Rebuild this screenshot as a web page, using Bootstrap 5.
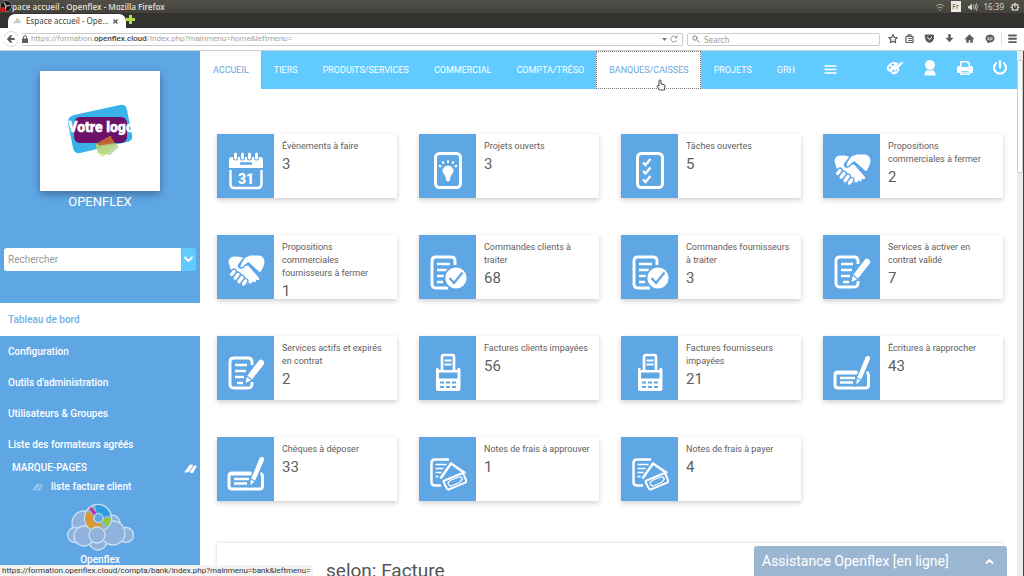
<!DOCTYPE html>
<html lang="fr">
<head>
<meta charset="utf-8">
<meta name="viewport" content="width=device-width, initial-scale=1">
<title>Espace accueil - Openflex</title>
<link href="https://cdn.jsdelivr.net/npm/bootstrap@5.3.0/dist/css/bootstrap.min.css" rel="stylesheet">
<style>
  :root { --side: #5fa6e5; --sky: #61caff; --ui: "Noto Sans", "Open Sans", sans-serif; --app: Roboto, sans-serif; }
  body { font-family: var(--app); font-size: 10px; line-height: 14px; color: #606060; background: #fff; }
  a { text-decoration: none; color: inherit; }
  svg { display: block; flex: none; }
  .ico { fill: none; stroke: currentColor; stroke-linecap: round; stroke-linejoin: round; }
  .ui { font-family: var(--ui); font-size: 8px; }

  /* browser chrome */
  .titlebar { height: 13px; background: linear-gradient(#504f48, #43423c); color: #dcd8ce; }
  .indicators { gap: 6px; }
  .win-name { font-size: 8px; font-weight: 600; }
  .lang { background: #eceae5; color: #45443f; font-size: 7px; line-height: 11px; width: 10px; }
  .tabstrip { height: 15px; background: #33322e; }
  .tab { width: 118px; height: 14px; background: #fff; border-radius: 7px 7px 0 0; color: #444; }
  .toolbar { height: 23px; background: #fff; border-bottom: 1px solid #d0d0d0; color: #5c5c5c; padding: 0 6px 0 4px; }
  .field { height: 13px; border: 1px solid #ccc; border-radius: 2px; background: #fff; }
  .field input { border: 0; outline: 0; padding: 0; min-width: 0; line-height: 11px; color: #666; background: transparent; }
  .field input::placeholder { color: #999; }
  .address { gap: 3px; padding: 0 4px 0 0; }
  .url, .statusline { font-family: var(--app); }
  .url { color: #a4a4a4; white-space: nowrap; }
  .url b { color: #444; font-weight: 500; }
  .searchbox { width: 193px; }
  .plain { border: 0; background: none; padding: 0; color: inherit; }

  /* sidebar */
  .sidebar { width: 200px; background: var(--side); color: #fff; }
  .logo-box { width: 120px; height: 120px; background: #fff; box-shadow: 0 3px 8px rgba(0,0,0,.35); margin-top: 20px; }
  .company { font-size: 13px; line-height: 22px; }
  .finder { margin: 35px 4px 32px; height: 23px; }
  .finder input { border: 0; padding: 0 4px; font-size: 10px; border-radius: 3px 0 0 3px; min-width: 0; color: #555; }
  .finder input::placeholder { color: #999; }
  .finder button { width: 15px; background: var(--sky); border: 0; border-radius: 0 3px 3px 0; color: #fff; padding: 0; }
  .side-menu a { display: block; padding: 8px; line-height: 15px; font-weight: 500; }
  .side-menu a.active { background: #fff; color: #6fb0e6; padding: 9px 8px; }
  .marks { line-height: 16px; padding: 0 3px 0 12px; font-weight: 500; }
  .mark-item { font-size: 10px; line-height: 16px; padding: 3px 0 0 32px; font-weight: 500; }

  /* top navigation */
  .topnav { height: 38px; background: var(--sky); color: #fff; font-size: 9px; }
  .topnav a { display: flex; align-items: center; padding: 0 11px 0 12px; border: 1px dotted transparent; }
  .topnav a.active { background: #fff; color: #63a6df; }
  .topnav a.hovered { background: #fff; color: #6fa5d6; border-color: #777; }
  .topnav-tools { gap: 17px; padding: 0 8px 4px 0; }

  /* tiles */
  .tiles { display: grid; grid-template-columns: repeat(4, 1fr); gap: 37px 22px; padding: 45px 14px 0 17px; }
  .tile { height: 64px; background: #fff; box-shadow: 0 2px 5px rgba(0,0,0,.2); }
  .tile-pic { width: 57px; background: var(--side); color: #fff; padding-top: 16px; }
  .tile-text { font-size: 9px; line-height: 13px; padding: 6px 0 0 8px; }
  .tile-text strong { display: block; font-weight: 400; font-size: 15px; line-height: 22px; }
  .panel-next { margin: 42px 14px 0 17px; box-shadow: 0 0 4px rgba(0,0,0,.16); padding: 16px 0 0 109px; height: 60px; }
  .panel-next h2 { font-size: 19px; line-height: 24px; margin: 0; color: #555; font-weight: 400; }

  .scroller { width: 7px; background: #eeebeb; border-right: 1px solid #444; }
  .thumb { height: 113px; background: #fff; border: 1px solid #ccc; border-radius: 2px; margin-top: 9px; }
  .statusline { position: absolute; left: 0; bottom: 0; height: 11px; line-height: 11px; background: #f3f3f3; color: #333; padding: 0 2px; }
  .helpbox { position: absolute; right: 17px; bottom: 0; width: 253px; height: 30px; border: 0; background: #9ab6d1; color: #fff; border-radius: 3px 3px 0 0; font-size: 14px; padding: 0 13px 0 8px; }
  .pointer { position: absolute; left: 50%; top: 27px; margin-left: 8px; }
</style>
</head>
<body class="vh-100 d-flex flex-column overflow-hidden position-relative">

<svg width="0" height="0" class="position-absolute" aria-hidden="true">
  <defs>
    <symbol id="i-cal" viewBox="0 0 36 40">
      <path d="M1 18V10q0-3 3-3h28q3 0 3 3v8z" fill="currentColor"/>
      <path d="M2.500 20v14q0 4 4 4h23q4 0 4-4V20" fill="none" stroke="currentColor" stroke-width="2.500"/>
      <g stroke="#5fa6e5" stroke-width="5" stroke-linecap="round"><path d="M7.500 4v4M14.500 4v4M21.500 4v4M28.500 4v4"/></g>
      <g stroke="currentColor" stroke-width="3" stroke-linecap="round"><path d="M7.500 4v4M14.500 4v4M21.500 4v4M28.500 4v4"/></g>
      <path d="M12 13.500h12" stroke="#5fa6e5" stroke-width="2.500"/>
      <text x="18" y="33.500" text-anchor="middle" font-family="Roboto, sans-serif" font-weight="900" font-size="14" fill="currentColor">31</text>
    </symbol>
    <symbol id="i-bulb" viewBox="0 0 36 40">
      <rect x="5.500" y="3.500" width="25" height="34" rx="4" fill="none" stroke="currentColor" stroke-width="3"/>
      <path d="M18 15.500a5.500 5.500 0 0 1 5.500 5.500q0 2-2.500 4.500l-1 3h-4l-1-3q-2.500-2.500-2.500-4.500a5.500 5.500 0 0 1 5.500-5.500z" fill="currentColor"/>
      <circle cx="18" cy="29.500" r="2" fill="currentColor"/>
      <path d="M18 10.500v2.500M12.500 11.500l1.200 2.300M23.500 11.500l-1.200 2.300M9 15.500l2.200 1.200M27 15.500l-2.200 1.200" stroke="currentColor" stroke-width="2"/>
    </symbol>
    <symbol id="i-tasks" viewBox="0 0 36 40">
      <rect x="5.500" y="3.500" width="25" height="34" rx="4" fill="none" stroke="currentColor" stroke-width="3"/>
      <path d="m11 12.500 2.500 2.500 5-6M11 21l2.500 2.500 5-6M11 29.500l2.500 2.500 5-6" fill="none" stroke="currentColor" stroke-width="2.300"/>
    </symbol>
    <symbol id="i-hands" viewBox="0 0 38 40">
      <path d="M1.500 11Q2 6 7 5.500l5.500.2q2 .3 4 1.300L11 13.500q-1 3 2 4 3 .5 5-2.500l3-.5L32 27q.8 2-1 2.300-1.300 0-2.300-1 .8 2.500-.7 3-1.700.4-3-1.500.6 2.500-1 2.800-1.800 0-2.700-1.600.3 2-1.200 2.200-1.300 0-2.100-1.200L7 20.500 3.500 18z" fill="currentColor"/>
      <path d="m17.500 7 6-2.500h9q4.500 1 5 6-.2 5-4.500 11L21.500 11.500q-2 1.500-4.500 4.200-2 1.300-3.500 0 0-2 4-8.700z" fill="currentColor"/>
      <path d="M17.500 6.500 11.800 14q-.6 2.600 2 3 2.400 0 4.700-3l2.800-2.200L33.500 23" fill="none" stroke="#5fa6e5" stroke-width="1.300"/>
      <path d="m7 20.500-2.500 3M11 23.500l-2.800 3.700M15 26.500 12 30.700M18.500 30 16.500 33" stroke="#5fa6e5" stroke-width="6.200" stroke-linecap="round"/>
      <path d="m7 20.500-2.500 3M11 23.500l-2.800 3.700M15 26.500 12 30.700M18.500 30 16.500 33" stroke="currentColor" stroke-width="3.400" stroke-linecap="round"/>
    </symbol>
    <symbol id="i-done" viewBox="0 0 38 40">
      <path d="M26 14V10q0-4-4-4H7q-4 0-4 4v23q0 4 4 4h12" fill="none" stroke="currentColor" stroke-width="2.900"/>
      <path d="M8 13h13M8 19h10M8 25h7M8 31h6" stroke="currentColor" stroke-width="2.300"/>
      <circle cx="27" cy="27" r="11.500" fill="currentColor" stroke="#5fa6e5" stroke-width="1.800"/>
      <path d="m20.500 27 4.500 5 8.500-10.500" fill="none" stroke="#5fa6e5" stroke-width="2.200"/>
    </symbol>
    <symbol id="i-edit" viewBox="0 0 38 40">
      <path d="M25 13V10q0-4-4-4H7q-4 0-4 4v22q0 4 4 4h14q4 0 4-4v-2" fill="none" stroke="currentColor" stroke-width="2.900"/>
      <path d="M8 13h12M8 19h11M8 25h9M10 31h6" stroke="currentColor" stroke-width="2.300"/>
      <path d="m17.500 32 2-8.500L31.500 8q2.500-2.500 5 0t.7 5L25 28.500z" fill="currentColor" stroke="#5fa6e5" stroke-width="1.300"/>
      <path d="m20 24 4.500 4" stroke="#5fa6e5" stroke-width="1.200"/>
    </symbol>
    <symbol id="i-pos" viewBox="0 0 36 40">
      <path d="M12 18V5q0-2 2-2h8q2 0 2 2v13" fill="none" stroke="currentColor" stroke-width="2.700"/>
      <path d="M14.500 8.500h7M14.500 12.500h7" stroke="currentColor" stroke-width="2"/>
      <path d="M6.500 16h2v2h19v-2h2l1 1.500V37q0 2-2 2H8q-2 0-2-2V17.500z" fill="currentColor"/>
      <path d="M9 20.500h18.500v6H9z" fill="#5fa6e5"/>
      <path d="M10 30.500h4M16 30.500h4M22 30.500h4M10 35h4M16 35h4M22 35h4" stroke="#5fa6e5" stroke-width="1.800"/>
    </symbol>
    <symbol id="i-check" viewBox="0 0 38 40">
      <path d="M3 21h23M33.500 20q2 1 2 3v10q0 3-3 3H5q-3 0-3-3V23q0-3 3-3h19" fill="none" stroke="currentColor" stroke-width="3"/>
      <path d="M7 26h15M7 30.500h13" stroke="currentColor" stroke-width="2.300"/>
      <path d="m22.500 34 .8-8 8.700-21q1.500-2.500 4-1.500 2.500 1.300 1.500 4L28.500 28.500z" fill="currentColor" stroke="#5fa6e5" stroke-width="1.300"/>
      <path d="m23 25.500 5.500 3" stroke="#5fa6e5" stroke-width="1.200"/>
    </symbol>
    <symbol id="i-cash" viewBox="0 0 38 40">
      <path d="M20 6.500H6q-3.500 0-3.500 3.500v19q0 3.500 3.500 3.500h6" fill="none" stroke="currentColor" stroke-width="2.500"/>
      <path d="M6.500 11.500h11M6.500 15.500h8M6.500 19.500h6M6.500 23.500h3" stroke="currentColor" stroke-width="1.700"/>
      <path d="M11.500 25.500 22 10.500l13 9" fill="none" stroke="currentColor" stroke-width="2.400"/>
      <path d="M34 17.500q2 0 2.500 1.500l.5 2-5-3.500z" fill="currentColor"/>
      <path d="m15.500 27.500 17-7q1.500-.5 2.200 1l2.500 6q.5 1.500-1 2.200l-16 6.500q-1.700.6-2.400-.9l-3-5.800q-.6-1.500.7-2z" fill="none" stroke="currentColor" stroke-width="2"/>
      <path d="m19 29.500 3-2.500 8-3q2.500-.5 3.500 2l-3 3.500-8 3.200q-3 .6-3.500-3.200z" fill="none" stroke="currentColor" stroke-width="1.200"/>
    </symbol>
    <symbol id="i-clip" viewBox="0 0 12 10">
      <path d="M1.500 8 6 2l1.500.3L4 7.500zM6.300 8.300 10 3l.8 0L8 8.300z" fill="currentColor" stroke="currentColor" stroke-width="1.600" stroke-linejoin="round"/>
    </symbol>
  </defs>
</svg>

<header class="ui flex-shrink-0">
  <div class="titlebar d-flex align-items-center justify-content-between">
    <div class="d-flex align-items-center">
      <svg width="12" height="13" viewBox="0 0 12 13"><circle cx="6" cy="6" r="5.500" fill="#161616" stroke="#aaa" stroke-width=".6"/><path d="M6 6 4 2.500M6 6l4-.5M6 6l-1 4" stroke="#ccc" stroke-width="1.200"/><circle cx="2.800" cy="9.500" r="2.600" fill="#e3120b"/></svg>
      <span class="win-name">pace accueil - Openflex - Mozilla Firefox</span>
    </div>
    <div class="indicators d-flex align-items-center pe-1">
      <svg class="ico" width="10" height="10" viewBox="0 0 10 10" opacity=".65"><path d="M1 4q4-3.500 8 0M2.500 6q2.500-2 5 0M4.300 8q.7-.6 1.400 0"/></svg>
      <span class="lang text-center">Fr</span>
      <svg class="ico" width="11" height="10" viewBox="0 0 11 10"><path d="M1 4v2.500h1.500L5 8.500v-7L2.500 4z" fill="currentColor" stroke="none"/><path d="M6.500 3.500q1 1.500 0 3M8 2.500q1.600 2.500 0 5M9.500 1.500q2 3.500 0 7" stroke-width=".8"/></svg>
      <span>16:39</span>
      <svg class="ico" width="10" height="10" viewBox="0 0 10 10"><circle cx="5" cy="5.300" r="3" stroke-width="1.100"/><path d="M5 1v4M1 5.300h1M8 5.300h1M2.200 8.200l.5-.5M7.800 8.200l-.5-.5M2.200 2.400l.5.5M7.800 2.400l-.5.500" stroke-width="1.200"/></svg>
    </div>
  </div>
  <div class="tabstrip d-flex align-items-end ps-1">
    <div class="tab d-flex align-items-center ms-1 ps-1 pe-2">
      <svg width="10" height="8" viewBox="0 0 10 8"><path d="M1 6.500q0-2 2-2 1-2.500 3-1.500 3 .3 3 3z" fill="#b9cfdd"/><path d="M4 2.500q1.500-1.500 3 0" stroke="#d9a541" fill="none"/></svg>
      <span class="ps-1 flex-grow-1 text-nowrap">Espace accueil - Ope…</span>
      <button class="plain" aria-label="Fermer l’onglet"><svg width="5" height="5" viewBox="0 0 5 5"><path d="m.5.5 4 4M4.500.5l-4 4" stroke="#555" stroke-width="1.400"/></svg></button>
    </div>
    <button class="plain mb-1" aria-label="Nouvel onglet"><svg width="9" height="9" viewBox="0 0 9 9"><path d="M3 0h3v3h3v3H6v3H3V6H0V3h3z" fill="#b4dd48"/></svg></button>
  </div>
  <div class="toolbar d-flex align-items-center gap-1">
    <button class="plain" aria-label="Page précédente"><svg class="ico" width="14" height="16" viewBox="0 0 14 16"><circle cx="7" cy="8" r="7.500" stroke="#ccc" stroke-width=".7"/><path d="M10 8H4.500M7 5 4 8l3 3" stroke-width="1.800"/></svg></button>
    <div class="field address flex-grow-1 d-flex align-items-center border-start-0">
      <svg width="6" height="8" viewBox="0 0 6 8"><path d="M0 3.500h6V8H0z" fill="currentColor"/><path d="M1.500 4V2.200a1.500 1.500 0 0 1 3 0V4" fill="none" stroke="currentColor"/></svg>
      <span class="url flex-grow-1">https://formation.<b>openflex.cloud</b>/index.php?mainmenu=home&amp;leftmenu=</span>
      <svg width="5" height="4" viewBox="0 0 5 4"><path d="M0 1h5L2.500 4z" fill="#777"/></svg>
      <svg class="ico" width="8" height="8" viewBox="0 0 8 8"><path d="M6.500 5.500a3 3 0 1 1 0-3M7 .8v2H5" stroke="#999"/></svg>
    </div>
    <label class="field searchbox d-flex align-items-center gap-1 px-1">
      <svg class="ico" width="8" height="8" viewBox="0 0 8 8"><circle cx="3" cy="3" r="2.200" stroke="#888"/><path d="m5 5 2.300 2.300" stroke="#888"/></svg>
      <input class="flex-grow-1" type="text" placeholder="Search" aria-label="Search">
    </label>
    <svg class="ico ms-1" width="130" height="12" viewBox="0 0 130 12">
      <path d="m5 1.500 1.300 2.800 3 .3L7 6.700l.7 3L5 8.200l-2.700 1.500.7-3L.8 4.600l3-.3z" stroke-width="1.200"/>
      <path d="M18 3.500h7v6h-7zM20 3V1.800h3V3M20.500 5.500h3M20.500 7.500h3" stroke-width="1.200"/>
      <path d="M37.500 2h8v3.500q-.5 3.500-4 4-3.500-.5-4-4z" fill="currentColor"/><path d="m39.500 4.500 2 2 2-2" stroke="#fff"/>
      <path d="M60.500 1.500h2V5H65l-3.500 4L58 5h2.500z" fill="currentColor" stroke-width=".5"/>
      <path d="m77 6 4.500-4.500L86 6h-1.500v3.500h-2V7h-2v2.500h-2V6z" fill="currentColor" stroke-width=".5"/>
      <path d="M102 1.500q4.500.5 4.500 4t-4.500 4l-3 .5.500-1.500q-2-1-2-3 0-3.500 4.500-4z" fill="currentColor" stroke="none"/><path d="M99.500 5h5M100 6.500q2 1.500 4 0" stroke="#fff" stroke-width=".8"/>
      <path d="M113.500 0v12" stroke="#ddd"/>
      <path d="M121 2.500h7M121 5.800h7M121 9.100h7" stroke-width="1.900"/>
    </svg>
  </div>
</header>

<div class="flex-grow-1 d-flex overflow-hidden">
  <aside class="sidebar flex-shrink-0 d-flex flex-column">
    <div class="logo-box mx-auto d-flex align-items-center justify-content-center flex-shrink-0">
      <svg width="68" height="54" viewBox="0 0 68 54" role="img" aria-label="Votre logo">
        <path d="M8 11 54 1q6-1 7 5l5 25q1 6-5 7L14 49q-6 1-7-5L2 19q-1-6 6-8z" fill="#37b3ea"/>
        <rect x="8" y="13" width="53" height="26" rx="6" fill="#6b1268"/>
        <path d="m30 40 14-8 6 9-13 12q-7-4-7-13z" fill="#dfe35c" opacity=".75"/><path d="m31 39 14-7 4 8-16 2z" fill="#c05026" opacity=".8"/><path d="m30 42 19-3 4 4-9 8-12-2z" fill="#a9d08a" opacity=".75"/>
        <text x="35" y="28" text-anchor="middle" font-family="Roboto, sans-serif" font-weight="900" font-size="14" fill="#fff" stroke="#fff" stroke-width=".4">Votre logo</text>
      </svg>
    </div>
    <div class="company text-center">OPENFLEX</div>
    <form class="finder d-flex flex-shrink-0">
      <input class="flex-grow-1" type="text" placeholder="Rechercher" aria-label="Rechercher">
      <button type="button" aria-label="Options de recherche"><svg class="ico mx-auto" width="9" height="7" viewBox="0 0 9 7"><path d="m1 1.500 3.500 3.500L8 1.500" stroke-width="1.800"/></svg></button>
    </form>
    <nav class="side-menu">
      <a class="active" href="#">Tableau de bord</a>
      <a href="#">Configuration</a>
      <a href="#">Outils d'administration</a>
      <a href="#">Utilisateurs &amp; Groupes</a>
      <a href="#">Liste des formateurs agréés</a>
    </nav>
    <div class="marks d-flex justify-content-between align-items-center"><span>MARQUE-PAGES</span><svg width="13" height="11"><use href="#i-clip"/></svg></div>
    <a class="mark-item d-flex align-items-center gap-2" href="#"><svg width="11" height="10" opacity=".35"><use href="#i-clip"/></svg>liste facture client</a>
    <svg class="mx-auto mt-2" width="68" height="50" viewBox="0 0 68 50" role="img" aria-label="Nuage Openflex">
      <g fill="#8fb3dc" stroke="#c9dff4" stroke-width="1.300">
        <circle cx="46" cy="20" r="8"/><circle cx="18" cy="20" r="12"/><circle cx="9" cy="32" r="7.500"/><circle cx="60" cy="32" r="7.500"/><circle cx="32" cy="38" r="9"/><circle cx="18" cy="33" r="10"/><circle cx="47" cy="30" r="12"/>
        <circle cx="32" cy="15" r="13.500"/>
      </g>
      <g fill="none" stroke-width="8">
        <path d="M30 6.300A9 9 0 0 1 40.500 13" stroke="#2d9fe0"/><path d="M41 15a9 9 0 0 1-2.500 6" stroke="#93c83e"/><path d="M36 23.500A9 9 0 0 1 24.500 10.500" stroke="#d79a35"/><path d="m25.500 9 2.500-2" stroke="#c3359a"/>
      </g>
      <circle cx="32.500" cy="15" r="4.500" fill="#5fa6e5" stroke="#d8eafa"/>
      <circle cx="31" cy="32" r="8" fill="#8fb3dc" stroke="#c9dff4" stroke-width="1.300"/>
    </svg>
    <div class="text-center fw-medium">Openflex</div>
  </aside>

  <main class="flex-grow-1 overflow-hidden d-flex flex-column">
    <nav class="topnav d-flex flex-shrink-0">
      <a class="active" href="#">ACCUEIL</a>
      <a href="#">TIERS</a>
      <a href="#">PRODUITS/SERVICES</a>
      <a href="#">COMMERCIAL</a>
      <a href="#">COMPTA/TRÉSO</a>
      <a class="hovered position-relative" href="#">BANQUES/CAISSES
        <svg class="pointer" width="10" height="12" viewBox="0 0 10 12"><path d="M3 7V2q0-1 1-1t1 1v3l3 .5q1 .3 1 1.500L8.500 10v1h-5L1 7.500q0-1.200 2-.5z" fill="#fff" stroke="#333" stroke-width=".9"/></svg>
      </a>
      <a href="#">PROJETS</a>
      <a href="#">GRH</a>
      <a href="#" aria-label="Plus de menus"><svg class="ico ms-1" width="13" height="10" viewBox="0 0 13 10"><path d="M1 1h11M1 4.500h11M1 8h11" stroke-width="1.400"/></svg></a>
      <div class="topnav-tools ms-auto d-flex align-items-center">
        <button class="plain" aria-label="Thème"><svg width="18" height="16" viewBox="0 0 18 16"><path d="M7.500 2q3.500-.5 5 1.500L9.500 7l3.500 1q1 3-2 5.300-3.500 2.200-5.500 0Q5 11.500 3 11.500.5 11 1 7.500 2 3 7.500 2z" fill="#fff"/><path d="m9 9 1.500-3L16 2l1 .8L12 8z" fill="#fff" stroke="#fff" stroke-width=".6"/><g fill="#61caff"><circle cx="4" cy="7.500" r="1.200"/><circle cx="7" cy="4.800" r="1.200"/><circle cx="7.500" cy="11" r="1.200"/><circle cx="10.500" cy="10.500" r="1"/></g></svg></button>
        <button class="plain" aria-label="Utilisateur"><svg width="18" height="18" viewBox="0 0 18 18"><path d="M9 1q5 .3 5 5Q13.500 10.500 9 11 4.500 10.500 4 6 4 1.300 9 1zM3.500 15.500q0-3.500 3-4.500 2.500 1.500 5 0 3 1 3 4.500v1h-11z" fill="#fff"/></svg></button>
        <button class="plain" aria-label="Imprimer"><svg width="18" height="18" viewBox="0 0 18 18"><path d="M4 2h8l2 2v3h1q2 0 2 2v5h-3v2H4v-2H1V9q0-2 2-2h1z" fill="#fff"/><path d="M5.500 3.500h6v1.500h1v3h-7zM5.500 12h7v2.500h-7z" fill="#61caff"/><path d="M6 13.300h6" stroke="#fff"/></svg></button>
        <button class="plain" aria-label="Déconnexion"><svg class="ico" width="18" height="18" viewBox="0 0 18 18"><path d="M9 2v6.500M5 4.200a6 6 0 1 0 8 0" stroke-width="2.200"/></svg></button>
      </div>
    </nav>

    <section class="tiles">
      <a class="tile d-flex" href="#"><span class="tile-pic flex-shrink-0"><svg class="mx-auto" width="38" height="40"><use href="#i-cal"/></svg></span><span class="tile-text">Évènements à faire<strong>3</strong></span></a>
      <a class="tile d-flex" href="#"><span class="tile-pic flex-shrink-0"><svg class="mx-auto" width="38" height="40"><use href="#i-bulb"/></svg></span><span class="tile-text">Projets ouverts<strong>3</strong></span></a>
      <a class="tile d-flex" href="#"><span class="tile-pic flex-shrink-0"><svg class="mx-auto" width="38" height="40"><use href="#i-tasks"/></svg></span><span class="tile-text">Tâches ouvertes<strong>5</strong></span></a>
      <a class="tile d-flex" href="#"><span class="tile-pic flex-shrink-0"><svg class="mx-auto" width="38" height="40"><use href="#i-hands"/></svg></span><span class="tile-text">Propositions<br>commerciales à fermer<strong>2</strong></span></a>
      <a class="tile d-flex" href="#"><span class="tile-pic flex-shrink-0"><svg class="mx-auto" width="38" height="40"><use href="#i-hands"/></svg></span><span class="tile-text">Propositions<br>commerciales<br>fournisseurs à fermer<strong>1</strong></span></a>
      <a class="tile d-flex" href="#"><span class="tile-pic flex-shrink-0"><svg class="mx-auto" width="38" height="40"><use href="#i-done"/></svg></span><span class="tile-text">Commandes clients à<br>traiter<strong>68</strong></span></a>
      <a class="tile d-flex" href="#"><span class="tile-pic flex-shrink-0"><svg class="mx-auto" width="38" height="40"><use href="#i-done"/></svg></span><span class="tile-text">Commandes fournisseurs<br>à traiter<strong>3</strong></span></a>
      <a class="tile d-flex" href="#"><span class="tile-pic flex-shrink-0"><svg class="mx-auto" width="38" height="40"><use href="#i-edit"/></svg></span><span class="tile-text">Services à activer en<br>contrat validé<strong>7</strong></span></a>
      <a class="tile d-flex" href="#"><span class="tile-pic flex-shrink-0"><svg class="mx-auto" width="38" height="40"><use href="#i-edit"/></svg></span><span class="tile-text">Services actifs et expirés<br>en contrat<strong>2</strong></span></a>
      <a class="tile d-flex" href="#"><span class="tile-pic flex-shrink-0"><svg class="mx-auto" width="38" height="40"><use href="#i-pos"/></svg></span><span class="tile-text">Factures clients impayées<strong>56</strong></span></a>
      <a class="tile d-flex" href="#"><span class="tile-pic flex-shrink-0"><svg class="mx-auto" width="38" height="40"><use href="#i-pos"/></svg></span><span class="tile-text">Factures fournisseurs<br>impayées<strong>21</strong></span></a>
      <a class="tile d-flex" href="#"><span class="tile-pic flex-shrink-0"><svg class="mx-auto" width="38" height="40"><use href="#i-check"/></svg></span><span class="tile-text">Écritures à rapprocher<strong>43</strong></span></a>
      <a class="tile d-flex" href="#"><span class="tile-pic flex-shrink-0"><svg class="mx-auto" width="38" height="40"><use href="#i-check"/></svg></span><span class="tile-text">Chèques à déposer<strong>33</strong></span></a>
      <a class="tile d-flex" href="#"><span class="tile-pic flex-shrink-0"><svg class="mx-auto" width="38" height="40"><use href="#i-cash"/></svg></span><span class="tile-text">Notes de frais à approuver<strong>1</strong></span></a>
      <a class="tile d-flex" href="#"><span class="tile-pic flex-shrink-0"><svg class="mx-auto" width="38" height="40"><use href="#i-cash"/></svg></span><span class="tile-text">Notes de frais à payer<strong>4</strong></span></a>
    </section>

    <section class="panel-next flex-shrink-0"><h2>selon: Facture</h2></section>
  </main>
  <div class="scroller flex-shrink-0"><div class="thumb"></div></div>
</div>

<div class="statusline ui text-nowrap">https://formation.openflex.cloud/compta/bank/index.php?mainmenu=bank&amp;leftmenu=</div>
<button class="helpbox d-flex align-items-center justify-content-between"><span>Assistance Openflex [en ligne]</span><svg class="ico" width="9" height="7" viewBox="0 0 9 7"><path d="m1.500 5 3-3 3 3" stroke-width="1.800"/></svg></button>
<script src="https://cdn.jsdelivr.net/npm/bootstrap@5.3.0/dist/js/bootstrap.bundle.min.js"></script>
</body>
</html>
